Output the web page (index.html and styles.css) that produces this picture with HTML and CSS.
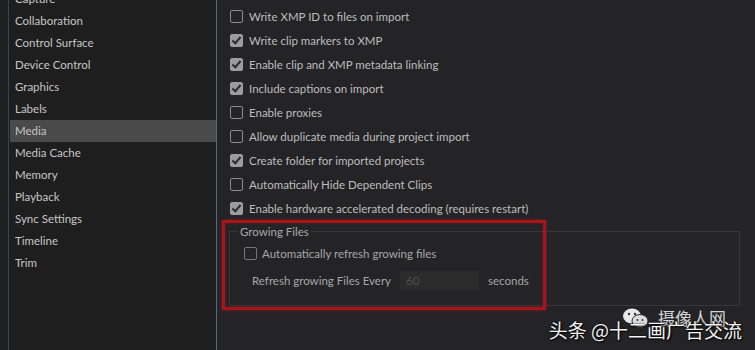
FILE: index.html
```html
<!DOCTYPE html>
<html lang="en">
<head>
    <meta charset="UTF-8">
    <title>Preferences - Media</title>
    <link rel="stylesheet" href="styles.css">
</head>
<body>
    <nav class="sidebar">
        <ul class="nav-list">
            <li>Capture</li>
            <li>Collaboration</li>
            <li>Control Surface</li>
            <li>Device Control</li>
            <li>Graphics</li>
            <li>Labels</li>
            <li class="active">Media</li>
            <li>Media Cache</li>
            <li>Memory</li>
            <li>Playback</li>
            <li>Sync Settings</li>
            <li>Timeline</li>
            <li>Trim</li>
        </ul>
    </nav>

    <main class="panel">
        <ul class="options">
            <li><span class="box"></span>Write XMP ID to files on import</li>
            <li><span class="box checked"></span>Write clip markers to XMP</li>
            <li><span class="box checked"></span>Enable clip and XMP metadata linking</li>
            <li><span class="box checked"></span>Include captions on import</li>
            <li><span class="box"></span>Enable proxies</li>
            <li><span class="box"></span>Allow duplicate media during project import</li>
            <li><span class="box checked"></span>Create folder for imported projects</li>
            <li><span class="box"></span>Automatically Hide Dependent Clips</li>
            <li><span class="box checked"></span>Enable hardware accelerated decoding (requires restart)</li>
        </ul>

        <div class="group-wrap">
            <fieldset class="group">
                <legend>Growing Files</legend>
                <div class="group-row"><span class="box"></span>Automatically refresh growing files</div>
                <div class="group-row refresh">
                    <span>Refresh growing Files Every</span>
                    <span class="num-input">60</span>
                    <span>seconds</span>
                </div>
            </fieldset>
            <div class="highlight"></div>
        </div>

        <div class="watermark">
            <div class="wm-top">
                <svg width="28" height="22" viewBox="0 0 28 22">
                    <ellipse cx="10" cy="9" rx="9" ry="7.5" fill="#e8e8e8"/>
                    <ellipse cx="18" cy="14" rx="8" ry="6.5" fill="#dcdcdc" stroke="#2a2a2a" stroke-width="1"/>
                    <circle cx="7" cy="7" r="1.2" fill="#333"/>
                    <circle cx="13" cy="7" r="1.2" fill="#333"/>
                    <circle cx="15.5" cy="13" r="1" fill="#333"/>
                    <circle cx="20.5" cy="13" r="1" fill="#333"/>
                </svg>
                <span class="wm-site">摄像人网</span>
            </div>
            <div class="wm-main">头条 @十二画广告交流</div>
        </div>
    </main>
</body>
</html>
```

FILE: styles.css
```css
html, body {
    height: 100%;
    margin: 0;
}

body {
    display: flex;
    background-color: #1f2022;
    font-family: 'Lato', 'Open Sans', sans-serif;
    font-size: 11.5px;
    color: #c4c4c4;
    overflow: hidden;
}

.sidebar {
    margin-left: 8px;
    width: 207px;
    background-color: #1e1e1f;
    border-left: 1px solid #34475a;
    border-right: 1px solid #4f6d88;
    overflow: hidden;
}

.nav-list {
    list-style: none;
    margin: -12px 0 0 0;
    padding: 0;
}

.nav-list li {
    height: 22px;
    line-height: 22px;
    padding-left: 5px;
    margin-left: 1px;
    color: #c6c6c6;
}

.nav-list li.active {
    background-color: #4a4a4b;
}

.panel {
    flex: 1;
    position: relative;
    background-color: #242426;
    padding-left: 5px;
}

.options {
    list-style: none;
    margin: 0;
    padding: 4px 0 0 8px;
}

.options li {
    height: 24px;
    display: flex;
    align-items: center;
    color: #bdbdbd;
}

.box {
    width: 11px;
    height: 11px;
    border: 1px solid #8c8c8c;
    border-radius: 2px;
    margin-right: 6px;
    flex-shrink: 0;
    position: relative;
}

.box.checked {
    background-color: #9c9c9c;
    border-color: #9c9c9c;
}

.box.checked::after {
    content: "";
    position: absolute;
    left: 3px;
    top: 0px;
    width: 3px;
    height: 7px;
    border: solid #2a2a2a;
    border-width: 0 2px 2px 0;
    transform: rotate(40deg);
}

.group-wrap {
    position: relative;
    padding: 5px 15px 0 7px;
}

.group {
    margin: 0;
    border: 1px solid #38383a;
    padding: 5px 0 0 14px;
    height: 74px;
}

.group legend {
    padding: 0 2px;
    margin-left: -6px;
    color: #a8a8a8;
}

.group-row {
    display: flex;
    align-items: center;
    height: 20px;
    color: #a6a6a6;
}

.group-row .box {
    border-color: #777;
    margin-right: 5px;
}

.group-row.refresh {
    height: 30px;
    margin-top: 2px;
    padding-left: 8px;
    gap: 9px;
}

.num-input {
    width: 73px;
    height: 19px;
    line-height: 19px;
    padding-left: 6px;
    background-color: #2c2c2d;
    color: #4e4e4e;
}

.highlight {
    position: absolute;
    left: 0;
    top: 0;
    width: 318px;
    height: 84px;
    border: 3px solid #a8141a;
    box-shadow: 0 0 3px rgba(200, 20, 30, 0.6), inset 0 0 2px rgba(200, 20, 30, 0.5);
}

.watermark {
    position: absolute;
    right: 13px;
    bottom: 6px;
    display: flex;
    flex-direction: column;
    align-items: flex-end;
    font-family: 'Noto Sans CJK SC', sans-serif;
    color: #f2f2f2;
    white-space: nowrap;
}

.wm-top {
    display: flex;
    align-items: center;
    gap: 8px;
    margin-right: 14px;
    margin-bottom: -13px;
    font-size: 17px;
}

.wm-site {
    display: inline-block;
    width: 70px;
    font-size: 17px;
    line-height: 22px;
    color: #d2d2d2;
}

.wm-main {
    font-size: 19px;
    line-height: 28px;
    text-shadow: 0 0 2px #000, 1px 1px 2px #000;
}
```
